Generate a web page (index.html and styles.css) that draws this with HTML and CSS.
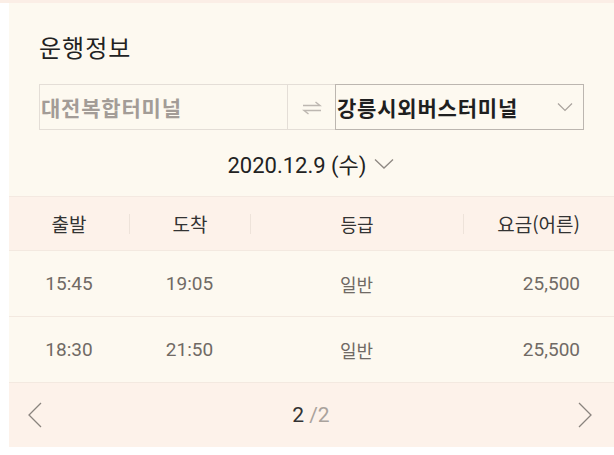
FILE: index.html
```html
<!DOCTYPE html>
<html lang="ko">
<head>
    <meta charset="UTF-8">
    <meta name="viewport" content="width=device-width, initial-scale=1.0">
    <title>운행정보</title>
    <link rel="stylesheet" href="styles.css">
</head>
<body>
    <div class="top-strip"></div>
    <div class="panel">
        <h2 class="title">운행정보</h2>

        <div class="route">
            <div class="route-from">대전복합터미널</div>
            <div class="route-swap">
                <svg width="20" height="14" viewBox="0 0 20 14" fill="none" stroke="#bdb7b1" stroke-width="1.4">
                    <path d="M1 4.5H18L13.5 1"/>
                    <path d="M19 9.5H2L6.5 13"/>
                </svg>
            </div>
            <div class="route-to">
                <span>강릉시외버스터미널</span>
                <svg width="16" height="10" viewBox="0 0 16 10" fill="none" stroke="#a9a39d" stroke-width="1.2">
                    <path d="M1 1.5L8 8.5L15 1.5"/>
                </svg>
            </div>
        </div>

        <div class="date">
            <span>2020.12.9 (수)</span>
            <svg width="20" height="12" viewBox="0 0 20 12" fill="none" stroke="#8f8983" stroke-width="1.3">
                <path d="M1 1.5L10 10L19 1.5"/>
            </svg>
        </div>

        <div class="table">
            <div class="row head">
                <div class="cell c1">출발</div>
                <div class="cell c2">도착</div>
                <div class="cell c3">등급</div>
                <div class="cell c4">요금(어른)</div>
            </div>
            <div class="row">
                <div class="cell c1">15:45</div>
                <div class="cell c2">19:05</div>
                <div class="cell c3">일반</div>
                <div class="cell c4">25,500</div>
            </div>
            <div class="row">
                <div class="cell c1">18:30</div>
                <div class="cell c2">21:50</div>
                <div class="cell c3">일반</div>
                <div class="cell c4">25,500</div>
            </div>
        </div>

        <div class="pager">
            <svg width="14" height="26" viewBox="0 0 14 26" fill="none" stroke="#8a847e" stroke-width="1.3">
                <path d="M13 1L1 13L13 25"/>
            </svg>
            <div class="page-num"><span class="current">2</span><span class="total">/2</span></div>
            <svg width="14" height="26" viewBox="0 0 14 26" fill="none" stroke="#8a847e" stroke-width="1.3">
                <path d="M1 1L13 13L1 25"/>
            </svg>
        </div>
    </div>
</body>
</html>
```

FILE: styles.css
```css
* {
    margin: 0;
    padding: 0;
    box-sizing: border-box;
}

body {
    background-color: #ffffff;
    font-family: Roboto, 'Noto Sans CJK KR', sans-serif;
    color: #222;
}

.top-strip {
    height: 3px;
    background-color: #fbeee6;
}

.panel {
    margin-left: 9px;
    background-color: #fdf9f0;
}

.title {
    font-family: 'Noto Sans CJK KR', sans-serif;
    font-size: 24px;
    font-weight: 400;
    letter-spacing: 1px;
    color: #222;
    padding: 28px 0 0 30px;
    line-height: 32px;
}

.route {
    display: flex;
    margin: 21px 0 0 30px;
    height: 46px;
    width: 545px;
}

.route-from {
    width: 248px;
    border: 1px solid #e4ded7;
    border-right: none;
    font-family: 'Noto Sans CJK KR', sans-serif;
    font-weight: 700;
    font-size: 21px;
    letter-spacing: 0.8px;
    color: #a39c97;
    padding-left: 1px;
    display: flex;
    align-items: center;
}

.route-swap {
    width: 49px;
    border: 1px solid #e4ded7;
    display: flex;
    align-items: center;
    justify-content: center;
    padding-top: 2px;
}

.route-to {
    flex: 1;
    border: 1px solid #bcb6b0;
    margin-left: -1px;
    font-family: 'Noto Sans CJK KR', sans-serif;
    font-weight: 700;
    font-size: 21px;
    letter-spacing: 0.8px;
    color: #1f1f1f;
    display: flex;
    align-items: center;
    justify-content: space-between;
    padding: 0 10px 0 1px;
}

.date {
    display: flex;
    justify-content: center;
    align-items: center;
    gap: 7px;
    height: 66px;
    font-size: 22px;
    color: #222;
    padding-right: 2px;
}

.date svg {
    margin-top: 1px;
}

.table {
    border-top: 1px solid #f4e9e1;
}

.row {
    display: grid;
    grid-template-columns: 120px 121px 213px 1fr;
    align-items: center;
    height: 66px;
    border-bottom: 1px solid #f3e9e0;
    font-size: 19px;
    color: #706a65;
}

.row.head {
    height: 54px;
    background-color: #fdf2ea;
    color: #333;
    font-family: 'Noto Sans CJK KR', sans-serif;
    font-size: 19px;
}

.cell {
    text-align: center;
}

.cell.c3 {
    font-family: 'Noto Sans CJK KR', sans-serif;
    font-size: 18px;
}

.cell.c4 {
    text-align: right;
    padding-right: 34px;
}

.row.head .cell {
    border-left: 1px solid #eee3da;
    line-height: 20px;
}

.row.head .cell.c1 {
    border-left: none;
}

.pager {
    display: flex;
    align-items: center;
    justify-content: space-between;
    height: 64px;
    background-color: #fdf2ea;
    padding: 0 22px 0 19px;
}

.page-num {
    font-size: 21px;
    padding-left: 2px;
}

.current {
    color: #333;
}

.total {
    color: #aaa39d;
    margin-left: 5px;
}
```
